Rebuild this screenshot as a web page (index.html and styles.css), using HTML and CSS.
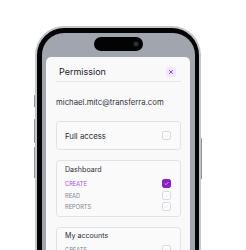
FILE: index.html
```html
<!DOCTYPE html>
<html lang="en">
<head>
<meta charset="utf-8">
<title>Permission</title>
<link rel="stylesheet" href="styles.css">
</head>
<body>
<div class="phone">
  <span class="btn btn-action"></span>
  <span class="btn btn-vol-up"></span>
  <span class="btn btn-vol-down"></span>
  <span class="btn btn-power"></span>
  <div class="bezel">
    <div class="screen">
      <div class="island"><span class="camera"></span></div>
      <div class="modal">
        <div class="modal-header">
          <span class="modal-title">Permission</span>
          <span class="close">
            <svg viewBox="0 0 10 10" width="10" height="10"><path d="M3.4 3.4 L6.6 6.6 M6.6 3.4 L3.4 6.6" stroke="#9b30d9" stroke-width="0.9" stroke-linecap="round" fill="none"/></svg>
          </span>
        </div>
        <div class="email">michael.mitc@transferra.com</div>

        <div class="card card-single">
          <div class="row">
            <span class="label-main">Full access</span>
            <span class="check"><svg viewBox="0 0 9 9"><path d="M2.6 4.7 L3.9 6 L6.5 3.2" /></svg></span>
          </div>
        </div>

        <div class="card card-group">
          <div class="group-title">Dashboard</div>
          <div class="rows">
            <div class="row">
              <span class="label-sub label-active">CREATE</span>
              <span class="check checked"><svg viewBox="0 0 9 9"><path d="M2.6 4.7 L3.9 6 L6.5 3.2" /></svg></span>
            </div>
            <div class="row">
              <span class="label-sub">READ</span>
              <span class="check"><svg viewBox="0 0 9 9"><path d="M2.6 4.7 L3.9 6 L6.5 3.2" /></svg></span>
            </div>
            <div class="row">
              <span class="label-sub">REPORTS</span>
              <span class="check"><svg viewBox="0 0 9 9"><path d="M2.6 4.7 L3.9 6 L6.5 3.2" /></svg></span>
            </div>
          </div>
        </div>

        <div class="card card-group">
          <div class="group-title">My accounts</div>
          <div class="rows">
            <div class="row">
              <span class="label-sub">CREATE</span>
              <span class="check"><svg viewBox="0 0 9 9"><path d="M2.6 4.7 L3.9 6 L6.5 3.2" /></svg></span>
            </div>
            <div class="row">
              <span class="label-sub">READ</span>
              <span class="check"><svg viewBox="0 0 9 9"><path d="M2.6 4.7 L3.9 6 L6.5 3.2" /></svg></span>
            </div>
          </div>
        </div>
      </div>
    </div>
  </div>
</div>
</body>
</html>
```

FILE: styles.css
```css
html, body {
  margin: 0;
  padding: 0;
  height: 250px;
  overflow: hidden;
  background: #ffffff;
  font-family: Inter, "Noto Sans", sans-serif;
}

.phone {
  position: relative;
  margin: 26px 0 0 35px;
  width: 166px;
  height: 300px;
  box-sizing: border-box;
  padding: 1.75px;
  border-radius: 29px;
  background: #c3c6cb;
}

.btn {
  position: absolute;
  width: 1.5px;
  background: #8e9197;
  border-radius: 1px;
}
.btn-action { left: -1.2px; top: 69px; height: 12px; }
.btn-vol-up { left: -1.2px; top: 93px; height: 24px; }
.btn-vol-down { left: -1.2px; top: 121px; height: 31px; }
.btn-power { right: -1.2px; top: 112px; height: 41px; }

.bezel {
  height: 100%;
  box-sizing: border-box;
  padding: 5.25px 4.75px 0 4.75px;
  border-radius: 27px;
  background: #050505;
}

.screen {
  height: 100%;
  box-sizing: border-box;
  padding: 4px 4.5px 0 4.5px;
  border-radius: 22px 22px 0 0;
  background: #a1a6ae;
  display: flex;
  flex-direction: column;
}

.island {
  align-self: center;
  width: 48.5px;
  height: 13.5px;
  border-radius: 7px;
  background: #030303;
  display: flex;
  align-items: center;
  justify-content: flex-end;
  padding-right: 4px;
  box-sizing: border-box;
  margin-left: 1px;
}

.camera {
  width: 6px;
  height: 6px;
  border-radius: 50%;
  background: radial-gradient(circle at 50% 50%, #2a3044 0 35%, #14161d 60%, #0a0a0c 100%);
}

.modal {
  margin-top: 6px;
  flex: 1;
  background: #f9f9fa;
  border-radius: 5px 5px 0 0;
  padding: 10px 9px 0 10px;
}

.modal-header {
  display: flex;
  align-items: center;
  justify-content: space-between;
  padding: 0 5px 4px 3px;
  border-bottom: 1.5px solid #e3e6ea;
}

.modal-title {
  font-size: 9px;
  line-height: 10px;
  color: #1d2026;
}

.close {
  width: 10px;
  height: 10px;
  border-radius: 2px;
  background: #f1e7fb;
  display: flex;
}
.close svg { display: block; }

.email {
  margin-top: 15.2px;
  font-size: 7.75px;
  line-height: 10px;
  color: #30333a;
  white-space: nowrap;
}

.card {
  border: 1px solid #dfe2e7;
  border-radius: 3.5px;
  background: #fafafb;
  margin-top: 10px;
}

.card-single {
  margin-top: 14.3px;
  padding: 9.25px 9px 9.25px 8px;
}

.card-group {
  padding: 3.5px 9px 4.5px 8px;
}

.row {
  display: flex;
  align-items: center;
  justify-content: space-between;
  height: 9px;
}

.label-main {
  font-size: 7.8px;
  color: #2a2d33;
}

.group-title {
  font-size: 7.1px;
  line-height: 9px;
  color: #2a2d33;
}

.rows {
  margin-top: 4.8px;
  display: flex;
  flex-direction: column;
  gap: 2.75px;
}

.label-sub {
  font-size: 5.7px;
  color: #80858e;
  letter-spacing: 0.02px;
}

.label-active {
  color: #b24ade;
}

.check {
  width: 9px;
  height: 9px;
  box-sizing: border-box;
  border: 0.8px solid #d6dae0;
  border-radius: 2.2px;
  background: #fcfcfd;
  display: flex;
}
.check svg {
  width: 100%;
  height: 100%;
  display: block;
}
.check path {
  fill: none;
  stroke: #dadde2;
  stroke-width: 0.6;
  stroke-linecap: round;
  stroke-linejoin: round;
}

.check.checked {
  border-color: #8a1fc4;
  background: #8a1fc4;
}
.check.checked path {
  stroke: #ffffff;
  stroke-width: 0.8;
}
```
